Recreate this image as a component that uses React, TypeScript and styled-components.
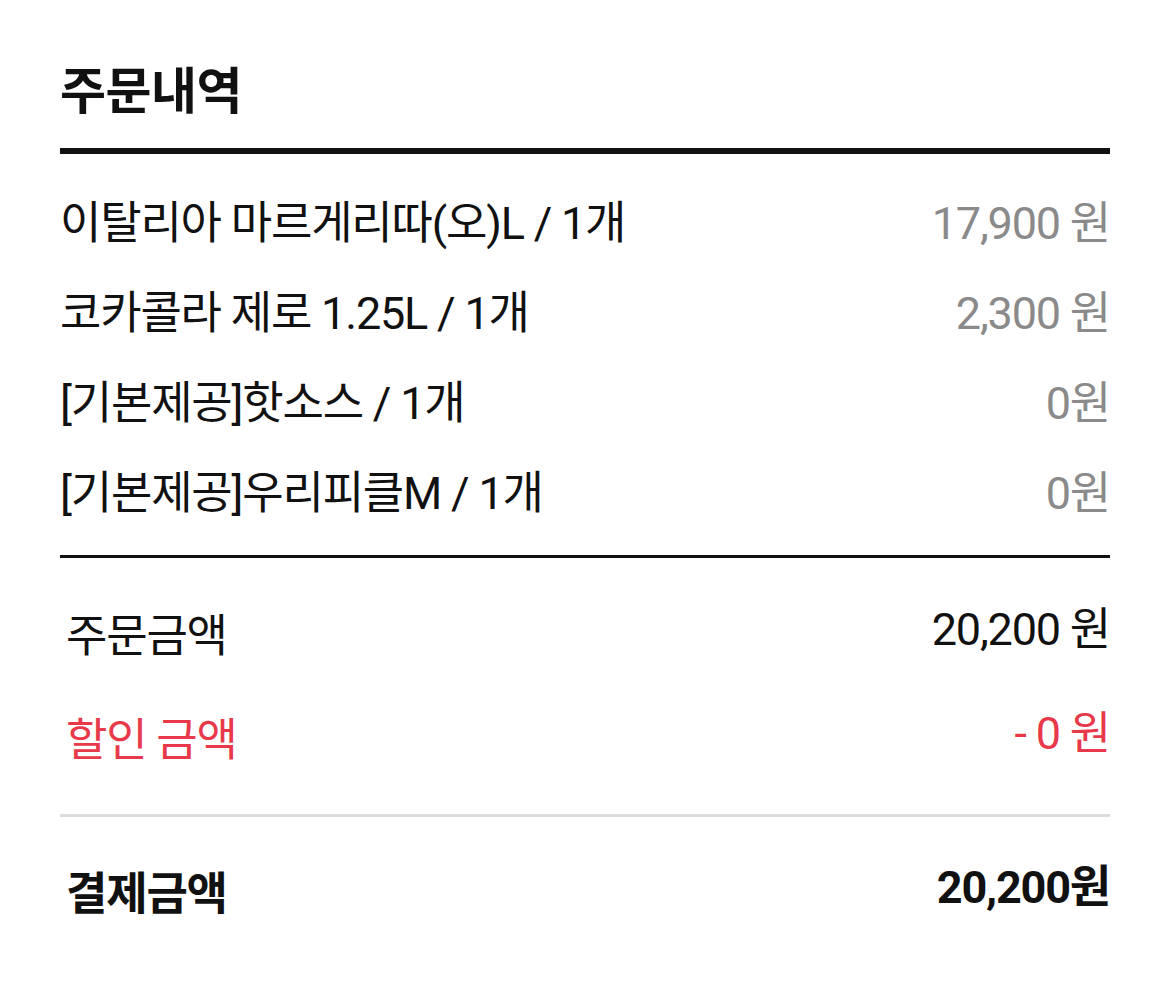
import React from "react";
import styled, { createGlobalStyle } from "styled-components";

const GlobalStyle = createGlobalStyle`
  html, body {
    margin: 0;
    padding: 0;
    background: #ffffff;
  }
  body {
    font-family: Roboto, "Noto Sans CJK KR", sans-serif;
    color: #111111;
  }
`;

const Page = styled.div`
  width: 1170px;
  box-sizing: border-box;
  padding: 52px 60px 0 60px;
`;

const Title = styled.h2`
  margin: 0;
  font-size: 50px;
  font-weight: 700;
  line-height: 80px;
  padding-bottom: 16px;
  border-bottom: 6px solid #111111;
  letter-spacing: -0.5px;
`;

const ItemList = styled.ul`
  list-style: none;
  margin: 0;
  padding: 20px 0 21px 0;
  border-bottom: 3px solid #111111;
`;

const ItemRow = styled.li`
  display: flex;
  justify-content: space-between;
  align-items: center;
  height: 90px;
  font-size: 45px;
  letter-spacing: -1.2px;
`;

const ItemName = styled.span`
  color: #111111;
`;

const ItemPrice = styled.span`
  color: #8a8a8a;
`;

const Summary = styled.div`
  padding: 18px 0 30px 0;
  border-bottom: 3px solid #dddddd;
`;

const SummaryRow = styled.div<{ $tone?: "normal" | "discount" }>`
  display: flex;
  justify-content: space-between;
  align-items: center;
  height: 104px;
  font-size: 45px;
  letter-spacing: -1.2px;
  color: ${(p) => (p.$tone === "discount" ? "#e8394a" : "#111111")};
`;

const Label = styled.span<{ $bold?: boolean }>`
  padding: 0 0 0 6px;
  transform: translateY(4px);
  font-weight: ${(p) => (p.$bold ? 700 : 400)};
`;

const Value = styled.span<{ $bold?: boolean }>`
  transform: translateY(-3px);
  font-weight: ${(p) => (p.$bold ? 700 : 400)};
`;

const Total = styled.div`
  padding-top: 17px;
`;

const items = [
  { name: "이탈리아 마르게리따(오)L / 1개", price: "17,900 원" },
  { name: "코카콜라 제로 1.25L / 1개", price: "2,300 원" },
  { name: "[기본제공]핫소스 / 1개", price: "0원" },
  { name: "[기본제공]우리피클M / 1개", price: "0원" },
];

export default function App() {
  return (
    <>
      <GlobalStyle />
      <Page>
        <Title>주문내역</Title>
        <ItemList>
          {items.map((it) => (
            <ItemRow key={it.name}>
              <ItemName>{it.name}</ItemName>
              <ItemPrice>{it.price}</ItemPrice>
            </ItemRow>
          ))}
        </ItemList>
        <Summary>
          <SummaryRow>
            <Label>주문금액</Label>
            <Value>20,200 원</Value>
          </SummaryRow>
          <SummaryRow $tone="discount">
            <Label>할인 금액</Label>
            <Value>- 0 원</Value>
          </SummaryRow>
        </Summary>
        <Total>
          <SummaryRow>
            <Label $bold>결제금액</Label>
            <Value $bold>20,200원</Value>
          </SummaryRow>
        </Total>
      </Page>
    </>
  );
}
